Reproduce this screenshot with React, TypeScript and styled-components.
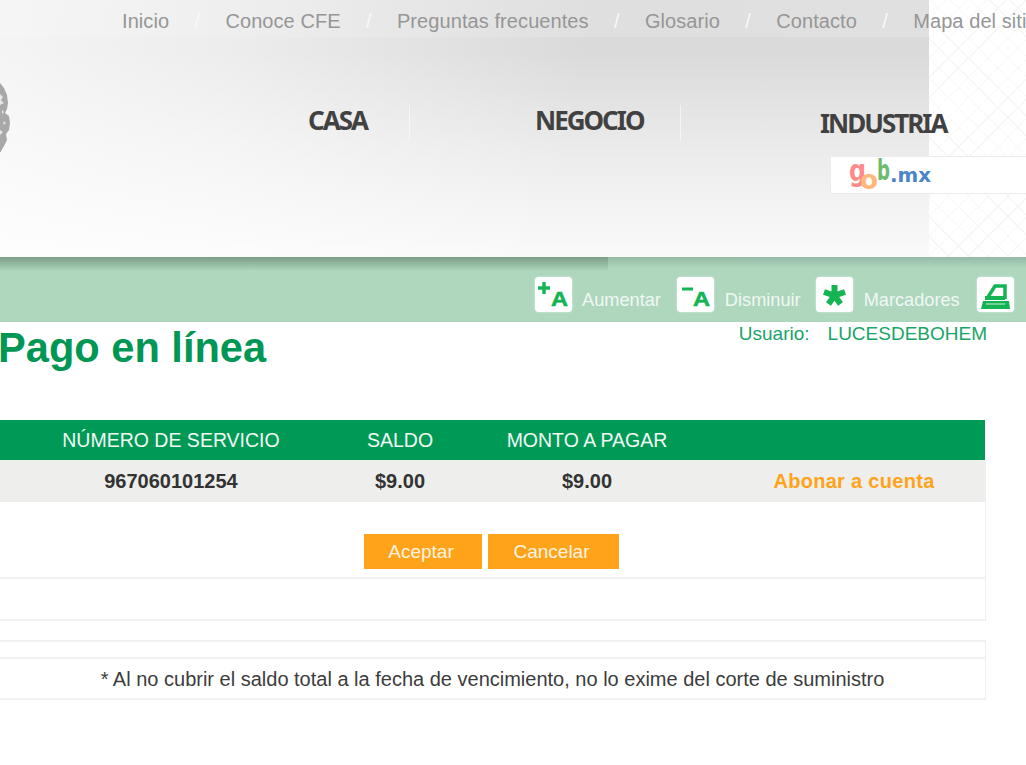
import { createGlobalStyle, styled } from 'styled-components';

const GlobalStyle = createGlobalStyle`
  html, body {
    margin: 0;
    padding: 0;
    background: #fff;
    overflow: hidden;
    font-family: "Liberation Sans", Arial, sans-serif;
  }
`;

const COLUMNS = '342px 116px 258px 1fr';
const GREEN = '#14b455';

const S = {
  Page: styled.div`
    width: 1026px;
    height: 765px;
    overflow: hidden;
  `,

  Banner: styled.header`
    height: 257px;
    display: flex;
    flex-direction: column;
    background:
      linear-gradient(97deg, rgba(255, 255, 255, 0.72) 0, rgba(255, 255, 255, 0.5) 25%, rgba(255, 255, 255, 0) 62%) 0 0 / 929px 100% no-repeat,
      linear-gradient(180deg, #dadada 0, #dadada 20%, #ececec 60%, #fafafa 100%) 0 0 / 929px 100% no-repeat,
      repeating-linear-gradient(45deg, transparent 0 13px, #f6f6f6 13px 14px),
      repeating-linear-gradient(-45deg, transparent 0 13px, #f6f6f6 13px 14px),
      #fff;
  `,

  TopNav: styled.nav`
    height: 37px;
    flex: none;
    box-sizing: border-box;
    display: flex;
    align-items: center;
    padding: 5px 0 0 122px;
    font-size: 20px;
    letter-spacing: 0.08px;
    color: #969696;
    white-space: nowrap;
    overflow: hidden;
    background: linear-gradient(90deg, rgba(255, 255, 255, 0.1), rgba(255, 255, 255, 0.16) 90.5%, rgba(255, 255, 255, 0) 90.5%);
  `,

  TopSlash: styled.span`
    color: #f9f9f9;
    margin: 0 25.3px;
  `,

  MenuRow: styled.div`
    height: 119px;
    flex: none;
    display: flex;
    box-sizing: border-box;
  `,

  MenuItem: styled.div<{ $width: number; $divider?: boolean }>`
    box-sizing: border-box;
    width: ${({ $width }) => $width}px;
    height: 36px;
    margin-top: 68px;
    line-height: 30px;
    border-right: ${({ $divider }) => ($divider ? '1px solid rgba(255, 255, 255, 0.55)' : 'none')};
    font-family: "Noto Sans", "Open Sans", sans-serif;
    font-weight: 700;
    font-size: 26px;
    letter-spacing: -2px;
    color: #414141;
  `,

  MenuLabel: styled.span<{ $offset: number; $low?: boolean }>`
    display: inline-block;
    margin-left: ${({ $offset }) => $offset}px;
    margin-top: ${({ $low }) => ($low ? 3 : 0)}px;
  `,

  EmblemSlot: styled.div`
    width: 308px;
    height: 72px;
    margin-top: 43px;
    flex: none;
  `,

  GobBox: styled.div`
    margin-left: 830px;
    height: 38px;
    flex: none;
    box-sizing: border-box;
    background: #fff;
    border: 1px solid #ececec;
    border-right: none;
    padding-left: 18px;
  `,

  Toolbar: styled.div`
    position: relative;
    height: 65px;
    box-sizing: border-box;
    display: flex;
    align-items: center;
    padding: 10px 0 0 535px;
    background: linear-gradient(180deg, #95b8a4 0, #aed7be 11px) #aed7be;
    white-space: nowrap;
    overflow: hidden;
  `,

  ToolbarShade: styled.div`
    position: absolute;
    left: 0;
    top: 0;
    width: 608px;
    height: 14px;
    background: linear-gradient(180deg, #7c9b88 0, #aed7be 100%);
  `,

  ToolIcon: styled.span`
    width: 37px;
    height: 35px;
    flex: none;
    background: #fff;
    border-radius: 4px;
    box-shadow: 0 0 2px rgba(255, 255, 255, 0.8);
    display: flex;
    align-items: center;
    justify-content: center;
  `,

  ToolLabel: styled.span<{ $gap: number; $left: number }>`
    margin: 11px ${({ $gap }) => $gap}px 0 ${({ $left }) => $left}px;
    font-size: 18.2px;
    color: #f1f7f3;
  `,

  TitleRow: styled.div`
    height: 98px;
    box-sizing: border-box;
    display: flex;
    justify-content: space-between;
    align-items: flex-start;
    padding-right: 39px;
  `,

  Title: styled.h1`
    margin: 2px 0 0 -2px;
    font-size: 41.6px;
    line-height: 48px;
    font-weight: 700;
    color: #009654;
  `,

  User: styled.div`
    margin-top: 1px;
    font-size: 19px;
    line-height: 22px;
    color: #1aa468;
    display: flex;
    gap: 18px;
  `,

  Table: styled.section`
    width: 986px;
  `,

  Head: styled.div`
    height: 40px;
    width: 985px;
    display: grid;
    grid-template-columns: ${COLUMNS};
    align-items: center;
    text-align: center;
    background: #009956;
    color: #f1f9f5;
    font-size: 19.5px;
  `,

  DataRow: styled.div`
    height: 42px;
    box-sizing: border-box;
    padding-top: 1px;
    display: grid;
    grid-template-columns: ${COLUMNS};
    align-items: center;
    text-align: center;
    background: #eeeeec;
    color: #333;
    font-size: 20px;
    font-weight: 700;
  `,

  PayLink: styled.a`
    color: #ffa31a;
    padding-left: 6px;
    letter-spacing: 0.3px;
  `,

  ButtonRow: styled.div`
    height: 77px;
    box-sizing: border-box;
    padding: 32px 2px 0 0;
    display: flex;
    justify-content: center;
    gap: 6px;
    border-right: 1px solid #eee;
    border-bottom: 2px solid #f1f1f1;
  `,

  ActionButton: styled.button<{ $width: number }>`
    width: ${({ $width }) => $width}px;
    height: 35px;
    border: none;
    padding: 1px 4px 0 0;
    background: #ffa31a;
    color: #fdf3e0;
    font-family: inherit;
    font-size: 19px;
  `,

  Line: styled.div<{ $height: number }>`
    height: ${({ $height }) => $height}px;
    box-sizing: border-box;
    padding-top: 1px;
    display: flex;
    align-items: center;
    justify-content: center;
    border-right: 1px solid #eee;
    border-bottom: 2px solid #f1f1f1;
    font-size: 20px;
    color: #3c3c3c;
    white-space: nowrap;
  `,

  FirstLine: styled.div`
    height: 19px;
    margin-top: 19px;
    box-sizing: border-box;
    border-top: 2px solid #f1f1f1;
    border-right: 1px solid #eee;
    border-bottom: 2px solid #f1f1f1;
  `,
};

function IconLetter() {
  return (
    <text
      x="16"
      y="29"
      fontFamily="Liberation Sans"
      fontWeight="700"
      fontSize="21"
      textLength="17"
      lengthAdjust="spacingAndGlyphs"
      fill={GREEN}
      stroke={GREEN}
      strokeWidth="0.6"
    >
      A
    </text>
  );
}

function PlusAIcon() {
  return (
    <svg width="37" height="35" viewBox="0 0 37 35">
      <path d="M3 11h12M9 5v12" stroke={GREEN} strokeWidth="3.4" />
      <IconLetter />
    </svg>
  );
}

function MinusAIcon() {
  return (
    <svg width="37" height="35" viewBox="0 0 37 35">
      <path d="M5 12h11" stroke={GREEN} strokeWidth="3" />
      <IconLetter />
    </svg>
  );
}

function StarIcon() {
  return (
    <svg width="37" height="35" viewBox="0 0 37 35">
      <path
        d="M18.5 18.5V8M18.5 18.5L8 15M18.5 18.5L29 15M18.5 18.5L12.5 27M18.5 18.5L24.5 27"
        stroke={GREEN}
        strokeWidth="6"
      />
    </svg>
  );
}

function PlotterIcon() {
  return (
    <svg width="37" height="35" viewBox="0 0 37 35">
      <path d="M11 20l7-11h10v13" fill="none" stroke={GREEN} strokeWidth="3.5" />
      <path d="M8 19h20v4H8z" fill={GREEN} />
      <path d="M6 24h26l1 8H4z" fill={GREEN} />
      <path d="M9 27h19" stroke="#8fdcae" strokeWidth="1.5" />
    </svg>
  );
}

function Emblem() {
  return (
    <svg width="12" height="72" viewBox="0 0 12 72">
      <path
        d="M0 3l4 5 3 7 1 8-1 6-2 4 4 3 1 7-1 7-3 4 1 6-3 6-4 7z"
        fill="#a8a8a8"
      />
      <path d="M0 14l3 3-2 3 3 3-4 2zM2 30l2 2-2 2zM4 41l2 2-3 2zM0 50l3 2-3 3z" fill="#e6e6e6" />
    </svg>
  );
}

function GobLogo() {
  return (
    <svg width="110" height="36" viewBox="0 0 110 36">
      <text x="0" y="24" fontFamily="DejaVu Sans" fontWeight="700" fontSize="31" textLength="17" lengthAdjust="spacingAndGlyphs" fill="#ff8a8a">
        g
      </text>
      <text x="28" y="23" fontFamily="DejaVu Sans" fontWeight="700" fontSize="29" textLength="13" lengthAdjust="spacingAndGlyphs" fill="#6dbb6d">
        b
      </text>
      <text x="11" y="32" fontFamily="DejaVu Sans" fontWeight="700" fontSize="27" textLength="18" lengthAdjust="spacingAndGlyphs" fill="#ffb87a">
        o
      </text>
      <text x="41" y="25" fontFamily="DejaVu Sans" fontWeight="700" fontSize="19" textLength="41" lengthAdjust="spacingAndGlyphs" fill="#4a86c6">
        .mx
      </text>
    </svg>
  );
}

const TOP_LINKS = ['Inicio', 'Conoce CFE', 'Preguntas frecuentes', 'Glosario', 'Contacto'];

function App() {
  return (
    <S.Page>
      <GlobalStyle />
      <S.Banner>
        <S.TopNav>
          {TOP_LINKS.map((link) => (
            <span key={link}>
              {link}
              <S.TopSlash>/</S.TopSlash>
            </span>
          ))}
          <span>Mapa del sitio</span>
        </S.TopNav>
        <S.MenuRow>
          <S.EmblemSlot>
            <Emblem />
          </S.EmblemSlot>
          <S.MenuItem $width={102} $divider>
            CASA
          </S.MenuItem>
          <S.MenuItem $width={271} $divider>
            <S.MenuLabel $offset={125}>NEGOCIO</S.MenuLabel>
          </S.MenuItem>
          <S.MenuItem $width={300}>
            <S.MenuLabel $offset={139} $low>
              INDUSTRIA
            </S.MenuLabel>
          </S.MenuItem>
        </S.MenuRow>
        <S.GobBox>
          <GobLogo />
        </S.GobBox>
      </S.Banner>

      <S.Toolbar>
        <S.ToolbarShade />
        <S.ToolIcon>
          <PlusAIcon />
        </S.ToolIcon>
        <S.ToolLabel $left={10} $gap={16}>
          Aumentar
        </S.ToolLabel>
        <S.ToolIcon>
          <MinusAIcon />
        </S.ToolIcon>
        <S.ToolLabel $left={11} $gap={15}>
          Disminuir
        </S.ToolLabel>
        <S.ToolIcon>
          <StarIcon />
        </S.ToolIcon>
        <S.ToolLabel $left={11} $gap={17}>
          Marcadores
        </S.ToolLabel>
        <S.ToolIcon>
          <PlotterIcon />
        </S.ToolIcon>
        <S.ToolLabel $left={11} $gap={0}>
          Imprimir
        </S.ToolLabel>
      </S.Toolbar>

      <S.TitleRow>
        <S.Title>Pago en línea</S.Title>
        <S.User>
          <span>Usuario:</span>
          <span>LUCESDEBOHEM</span>
        </S.User>
      </S.TitleRow>

      <S.Table>
        <S.Head>
          <span>NÚMERO DE SERVICIO</span>
          <span>SALDO</span>
          <span>MONTO A PAGAR</span>
          <span />
        </S.Head>
        <S.DataRow>
          <span>967060101254</span>
          <span>$9.00</span>
          <span>$9.00</span>
          <S.PayLink>Abonar a cuenta</S.PayLink>
        </S.DataRow>
        <S.ButtonRow>
          <S.ActionButton $width={118}>Aceptar</S.ActionButton>
          <S.ActionButton $width={131}>Cancelar</S.ActionButton>
        </S.ButtonRow>
        <S.Line $height={42} />
        <S.FirstLine />
        <S.Line $height={41}>
          * Al no cubrir el saldo total a la fecha de vencimiento, no lo exime del corte de suministro
        </S.Line>
      </S.Table>
    </S.Page>
  );
}

export default App;
